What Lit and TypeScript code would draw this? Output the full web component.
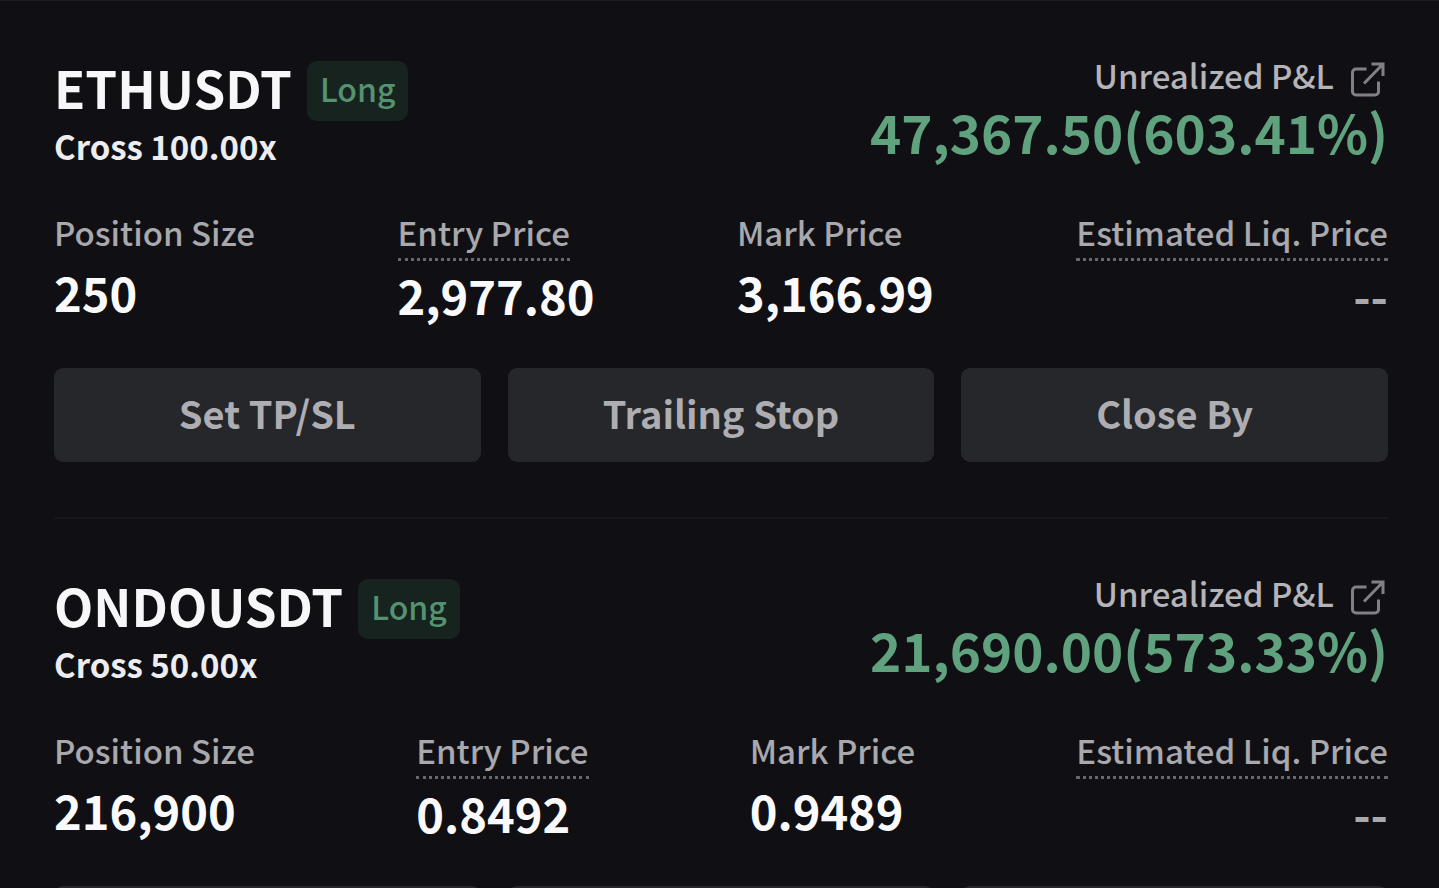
import { LitElement, html, css, svg } from "lit";
import { customElement, property } from "lit/decorators.js";

interface Position {
  symbol: string;
  side: string;
  margin: string;
  pnl: string;
  size: string;
  entry: string;
  mark: string;
  liq: string;
}

const POSITIONS: Position[] = [
  {
    symbol: "ETHUSDT",
    side: "Long",
    margin: "Cross 100.00x",
    pnl: "47,367.50(603.41%)",
    size: "250",
    entry: "2,977.80",
    mark: "3,166.99",
    liq: "--",
  },
  {
    symbol: "ONDOUSDT",
    side: "Long",
    margin: "Cross 50.00x",
    pnl: "21,690.00(573.33%)",
    size: "216,900",
    entry: "0.8492",
    mark: "0.9489",
    liq: "--",
  },
];

const ACTIONS = ["Set TP/SL", "Trailing Stop", "Close By"];

const shareIcon = svg`
  <path d="M15.500 8H5a3.500 3.500 0 0 0-3.500 3.500v19A3.500 3.500 0 0 0 5 34h19a3.500 3.500 0 0 0 3.500-3.500V20.500" />
  <path d="M13 22.500L31.500 3.500M20.500 3H32v12" />
`;

@customElement("position-card")
export class PositionCard extends LitElement {
  @property({ attribute: false }) position!: Position;

  static styles = css`
    :host {
      display: block;
      padding: 60px 0 55px;
      border-bottom: 2px solid #17171b;
    }
    h2,
    p,
    dl,
    dd {
      margin: 0;
    }
    .header {
      display: flex;
      justify-content: space-between;
      align-items: flex-start;
    }
    .title {
      display: flex;
      align-items: flex-start;
      gap: 15px;
    }
    .symbol {
      font-size: 51px;
      line-height: 52px;
      font-weight: 700;
      color: #f7f7f9;
    }
    .side {
      padding: 0 13px 6px;
      border-radius: 10px;
      background: #17231e;
      color: #559270;
      font-size: 32px;
      line-height: 54px;
      font-weight: 500;
    }
    .margin {
      font-size: 33px;
      line-height: 50px;
      font-weight: 700;
      color: #ededf0;
    }
    .summary {
      display: flex;
      flex-direction: column;
      align-items: flex-end;
    }
    .summary-label {
      display: flex;
      align-items: flex-start;
      gap: 17px;
      height: 35px;
      font-size: 33px;
      line-height: 28px;
      font-weight: 500;
      color: #b4b4b9;
    }
    .share {
      display: block;
      padding: 0;
      border: 0;
      background: none;
      color: #808085;
      cursor: pointer;
    }
    .share svg {
      display: block;
      width: 37px;
      height: 36px;
      fill: none;
      stroke: currentColor;
      stroke-width: 3;
    }
    .pnl {
      font-size: 53px;
      line-height: 70px;
      font-weight: 700;
      color: #60a17e;
    }
    .stats {
      display: flex;
      justify-content: space-between;
      margin-top: 40px;
    }
    .stat {
      display: flex;
      flex-direction: column;
      align-items: flex-start;
    }
    .stat:last-child {
      align-items: flex-end;
    }
    dt {
      padding-bottom: 8px;
      font-size: 33px;
      line-height: 42px;
      font-weight: 500;
      color: #a8a8ad;
    }
    .hint {
      margin-bottom: 3px;
      padding-bottom: 5px;
      border-bottom: 3px dotted #67676c;
    }
    dd {
      font-size: 47px;
      line-height: 62px;
      font-weight: 700;
      color: #fafafc;
    }
    .empty {
      color: #a8a8ad;
    }
    .actions {
      display: grid;
      grid-template-columns: repeat(3, 1fr);
      gap: 27px;
      margin-top: 42px;
    }
    .action {
      padding: 18px 0 22px;
      border: 0;
      border-radius: 9px;
      background: #25272b;
      color: #adadb2;
      font-family: inherit;
      font-size: 38px;
      line-height: 54px;
      font-weight: 700;
      cursor: pointer;
    }
  `;

  private stat(label: string, value: string, hint = false) {
    return html`
      <div class="stat">
        <dt class=${hint ? "hint" : ""}>${label}</dt>
        <dd class=${value === "--" ? "empty" : ""}>${value}</dd>
      </div>
    `;
  }

  render() {
    const p = this.position;
    return html`
      <div class="header">
        <div>
          <div class="title">
            <h2 class="symbol">${p.symbol}</h2>
            <span class="side">${p.side}</span>
          </div>
          <p class="margin">${p.margin}</p>
        </div>
        <div class="summary">
          <div class="summary-label">
            <span>Unrealized P&amp;L</span>
            <button class="share" type="button" aria-label="Share">
              <svg viewBox="0 0 37 36" aria-hidden="true">${shareIcon}</svg>
            </button>
          </div>
          <p class="pnl">${p.pnl}</p>
        </div>
      </div>
      <dl class="stats">
        ${this.stat("Position Size", p.size)}
        ${this.stat("Entry Price", p.entry, true)}
        ${this.stat("Mark Price", p.mark)}
        ${this.stat("Estimated Liq. Price", p.liq, true)}
      </dl>
      <div class="actions">
        ${ACTIONS.map((a) => html`<button class="action" type="button">${a}</button>`)}
      </div>
    `;
  }
}

@customElement("app-root")
export class AppRoot extends LitElement {
  static styles = css`
    :host {
      display: block;
      box-sizing: border-box;
      height: 100vh;
      overflow: hidden auto;
      scrollbar-width: none;
      padding: 0 51px 0 54px;
      border-top: 1px solid #1c1c20;
      background: #101014;
      font-family: "Noto Sans CJK SC", "Noto Sans", sans-serif;
    }
  `;

  render() {
    return html`${POSITIONS.map(
      (p) => html`<position-card .position=${p}></position-card>`
    )}`;
  }
}
